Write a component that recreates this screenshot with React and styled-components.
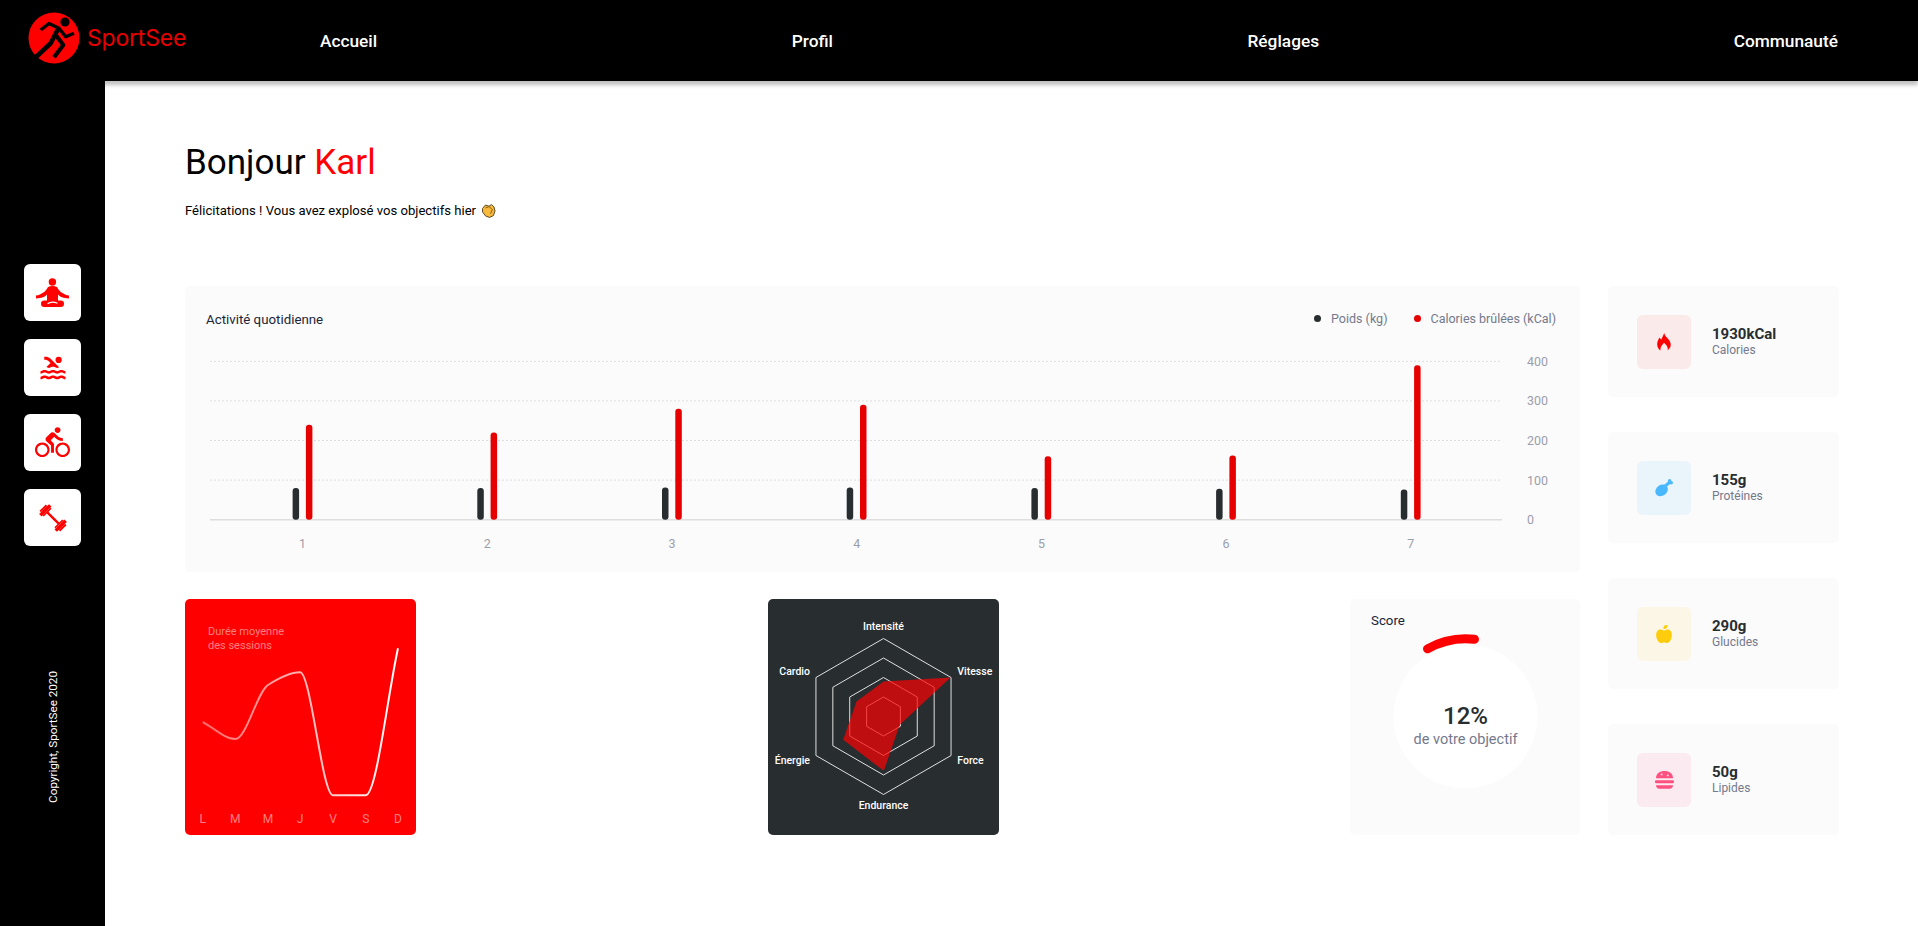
import React from 'react';
import styled, { createGlobalStyle } from 'styled-components';
import { MdPool, MdDirectionsBike } from 'react-icons/md';
import { FaAppleAlt } from 'react-icons/fa';

const GlobalStyle = createGlobalStyle`
  html, body {
    margin: 0;
    padding: 0;
    background: #fff;
    font-family: Roboto, "Liberation Sans", sans-serif;
  }
  * { box-sizing: border-box; }
`;

const Page = styled.div`
  display: flex;
  flex-direction: column;
  height: 926px;
  overflow: hidden;
`;

const Header = styled.header`
  position: relative;
  z-index: 2;
  display: flex;
  align-items: center;
  height: 81px;
  flex: none;
  padding: 0 80px 0 28px;
  background: #000;
  box-shadow: 0 4px 4px rgba(0, 0, 0, 0.25);
`;

const Logo = styled.div`
  display: flex;
  align-items: center;
  gap: 7px;
  width: 292px;
  flex: none;
  margin-top: -5px;
`;

const LogoName = styled.span`
  font-family: Inter, Roboto, sans-serif;
  font-size: 23px;
  color: #e60000;
  letter-spacing: -0.2px;
`;

const TopNav = styled.nav`
  flex: 1;
  display: flex;
  justify-content: space-between;
  margin-top: 1px;
`;

const TopLink = styled.a`
  font-size: 17.3px;
  font-weight: 500;
  color: #fff;
`;

const Body = styled.div`
  flex: 1;
  display: flex;
  min-height: 0;
`;

const Sidebar = styled.aside`
  width: 105px;
  flex: none;
  display: flex;
  flex-direction: column;
  align-items: center;
  padding: 183px 0 123px;
  background: #000;
`;

const SideIcons = styled.div`
  display: flex;
  flex-direction: column;
  gap: 18px;
`;

const SideIcon = styled.div`
  display: flex;
  align-items: center;
  justify-content: center;
  width: 57px;
  height: 57px;
  border-radius: 6px;
  background: #fff;
  color: #ff0101;
`;

const Copyright = styled.div`
  margin-top: auto;
  writing-mode: vertical-rl;
  transform: rotate(180deg);
  font-size: 11.7px;
  color: #fff;
`;

const Main = styled.main`
  flex: 1;
  min-width: 0;
  padding: 61px 79px 0 80px;
`;

const Title = styled.h1`
  margin: 0;
  font-size: 35px;
  line-height: 42px;
  font-weight: 400;
  color: #000;
`;

const Accent = styled.span`
  color: #ff0101;
`;

const Subtitle = styled.p`
  display: flex;
  align-items: center;
  gap: 5px;
  margin: 18px 0 0;
  height: 16px;
  font-size: 13.1px;
  color: #000;
`;

const Dashboard = styled.div`
  display: grid;
  grid-template-columns: 1395px 231px;
  column-gap: 28px;
  margin-top: 68px;
`;

const LeftColumn = styled.div`
  display: flex;
  flex-direction: column;
  gap: 27px;
`;

const ActivityCard = styled.section`
  height: 286px;
  border-radius: 5px;
  background: #fbfbfb;
`;

const ActivityHead = styled.div`
  display: flex;
  justify-content: space-between;
  align-items: center;
  height: 66px;
  padding: 0 24px 0 21px;
`;

const CardTitle = styled.h2`
  margin: 0;
  font-size: 13.3px;
  font-weight: 400;
  color: #20253a;
`;

const Legend = styled.div`
  display: flex;
  gap: 26px;
  margin-top: -2px;
`;

const LegendItem = styled.span`
  display: flex;
  align-items: center;
  gap: 10px;
  font-size: 12.5px;
  color: #74798c;
  &::before {
    content: '';
    width: 7px;
    height: 7px;
    border-radius: 50%;
    background: ${(p) => p.$color};
  }
`;

const ChartRow = styled.div`
  display: grid;
  grid-template-columns: 583px 582px 230px;
`;

const SmallCard = styled.section`
  position: relative;
  height: 236px;
  width: ${(p) => p.$width || 231}px;
  border-radius: 5px;
  overflow: hidden;
  background: ${(p) => p.$bg};
`;

const SessionTitle = styled.div`
  position: absolute;
  top: 26px;
  left: 23px;
  font-size: 11px;
  line-height: 13.5px;
  color: rgba(255, 255, 255, 0.5);
`;

const ScoreTitle = styled(CardTitle)`
  position: absolute;
  top: 14px;
  left: 21px;
`;

const ChartSvg = styled.svg`
  display: block;
`;

const TickText = styled.text`
  font-size: 12.4px;
  fill: #9b9eac;
`;

const DayText = styled.text`
  font-size: 12px;
  fill: rgba(255, 255, 255, 0.5);
`;

const RadarText = styled.text`
  font-size: 10.5px;
  font-weight: 500;
  fill: #fff;
`;

const ScoreValue = styled.text`
  font-size: 24px;
  font-weight: 500;
  fill: #282d30;
`;

const ScoreCaption = styled.text`
  font-size: 14.5px;
  fill: #74798c;
`;

const KeyColumn = styled.aside`
  display: flex;
  flex-direction: column;
  justify-content: space-between;
`;

const KeyCard = styled.div`
  display: flex;
  align-items: center;
  gap: 21px;
  height: 111px;
  padding-left: 29px;
  border-radius: 5px;
  background: #fbfbfb;
`;

const KeyIcon = styled.div`
  display: flex;
  align-items: center;
  justify-content: center;
  width: 54px;
  height: 54px;
  border-radius: 6px;
  background: ${(p) => p.$bg};
  color: ${(p) => p.$color};
`;

const KeyText = styled.div`
  display: flex;
  flex-direction: column;
  padding-bottom: 2px;
`;

const KeyValue = styled.strong`
  font-size: 15px;
  line-height: 18px;
  font-weight: 700;
  color: #282d30;
`;

const KeyLabel = styled.span`
  font-size: 12px;
  line-height: 14px;
  color: #74798c;
`;

const activity = [
  { day: 1, kg: 80, cal: 240 },
  { day: 2, kg: 80, cal: 220 },
  { day: 3, kg: 81, cal: 280 },
  { day: 4, kg: 81, cal: 290 },
  { day: 5, kg: 80, cal: 160 },
  { day: 6, kg: 78, cal: 162 },
  { day: 7, kg: 76, cal: 390 },
];

const sessions = [
  [17.7, 123, 'L'],
  [50.3, 140, 'M'],
  [83, 86, 'M'],
  [115, 73.3, 'J'],
  [148, 196.3, 'V'],
  [180.7, 196.3, 'S'],
  [213, 49.3, 'D'],
];

// same maths as a monotone x curve
const monotonePath = (pts) => {
  const n = pts.length;
  const d = [];
  const s = [];
  for (let i = 0; i < n - 1; i++) {
    s.push((pts[i + 1][1] - pts[i][1]) / (pts[i + 1][0] - pts[i][0]));
  }
  d[0] = s[0];
  d[n - 1] = s[n - 2];
  for (let i = 1; i < n - 1; i++) {
    d[i] = s[i - 1] * s[i] <= 0 ? 0 : (2 * s[i - 1] * s[i]) / (s[i - 1] + s[i]);
  }
  let path = `M${pts[0][0]} ${pts[0][1]}`;
  for (let i = 0; i < n - 1; i++) {
    const h = (pts[i + 1][0] - pts[i][0]) / 3;
    path += `C${pts[i][0] + h} ${pts[i][1] + d[i] * h} ${pts[i + 1][0] - h} ${
      pts[i + 1][1] - d[i + 1] * h
    } ${pts[i + 1][0]} ${pts[i + 1][1]}`;
  }
  return path;
};

const hexagon = (r) =>
  [0, 1, 2, 3, 4, 5]
    .map((i) => {
      const a = (i * Math.PI) / 3;
      return `${r * Math.sin(a)},${-r * Math.cos(a)}`;
    })
    .join(' ');

const LogoMark = () => (
  <svg width="52" height="52" viewBox="0 0 52 52">
    <circle cx="26" cy="26" r="25.5" fill="#ff0000" />
    <circle cx="37" cy="10" r="4.6" fill="#000" />
    <g fill="none" stroke="#000" strokeLinejoin="round">
      <path d="M12.7 18 21 11.5 31 16.3 37.7 24.7 46 21.3" strokeWidth="3.4" />
      <path d="M30 17 22.7 31.3 7.5 45.5" strokeWidth="4.6" />
      <path d="M27.7 23 35.3 33 26 45.3" strokeWidth="4.2" />
    </g>
  </svg>
);

const ClapIcon = () => (
  <svg width="15" height="15" viewBox="0 0 15 15">
    <path
      d="M1.5 5.5 4.5 2 8 3.2 10.5 1.6 13 4 14 8 12.4 12.6 8.6 14.4 4.6 13 1.6 9Z"
      fill="#f9b93c"
      stroke="#4c3a12"
      strokeWidth="0.9"
    />
    <path d="M4.4 5 8 3.6 11.4 6.6 9.4 10.8" fill="none" stroke="#7a5a14" strokeWidth="0.9" />
  </svg>
);

const YogaIcon = () => (
  <svg width="33" height="30" viewBox="0 0 33 30" fill="currentColor">
    <circle cx="16.4" cy="4" r="3.7" />
    <path d="M12 9C10 13.5 5.5 16.6 0 17.6V20.4C5.5 20.2 9.4 18.6 11 16.4V23H22V16.4C23.6 18.6 27.5 20.2 33 20.4V17.6C27.5 16.6 23 13.5 21 9 18.6 7.8 14.4 7.8 12 9Z" />
    <rect x="5" y="22.4" width="23" height="6.6" rx="3.3" />
    <path d="M11.5 25.7C14 23.9 18 23.7 21.5 25.3" fill="none" stroke="#fff" strokeWidth="1.1" />
  </svg>
);

const BarbellIcon = () => (
  <svg width="30" height="30" viewBox="0 0 30 30" fill="currentColor">
    <g transform="rotate(45 15 15)">
      <rect x="7" y="13.8" width="16" height="2.4" />
      <rect x="0.4" y="10.5" width="2" height="9" />
      <rect x="2.4" y="8" width="3.5" height="14" />
      <rect x="5.9" y="9.5" width="1.6" height="11" />
      <rect x="22.5" y="9.5" width="1.6" height="11" />
      <rect x="24.1" y="8" width="3.5" height="14" />
      <rect x="27.6" y="10.5" width="2" height="9" />
    </g>
  </svg>
);

const FlameIcon = () => (
  <svg width="14" height="18" viewBox="0 0 14 18" fill="currentColor">
    <path d="M7.2 0C7.6 3 10.2 4.6 12 7 13.6 9.2 14.4 12 13 14.6 12.4 15.8 11.4 16.8 10.6 17.4 11 15.6 10.6 14 9.6 12.6L7 9.8 4.6 12.8C3.6 14.2 3.2 15.8 3.6 17.4 2.4 16.8 1.4 15.6 0.8 14.2-0.4 11.4 0.2 8 2.6 4.6L4.2 6.8C5 4.6 6.4 2.4 7.2 0Z" />
  </svg>
);

const DrumstickIcon = () => (
  <svg width="18" height="18" viewBox="0 0 18 18" fill="currentColor">
    <ellipse cx="6.6" cy="11.4" rx="6.6" ry="5.4" transform="rotate(-35 6.6 11.4)" />
    <path d="M9 8 15 3" stroke="currentColor" strokeWidth="3" />
    <circle cx="14.6" cy="1.8" r="1.7" />
    <circle cx="16.3" cy="3.8" r="1.7" />
  </svg>
);

const BurgerIcon = () => (
  <svg width="19" height="18" viewBox="0 0 19 18" fill="currentColor">
    <path d="M1 7.3C1 2.4 5 0 9.5 0S18 2.4 18 7.3Z" />
    <circle cx="6.6" cy="3.4" r="0.9" fill="#fbeaef" />
    <circle cx="12.8" cy="4.4" r="0.9" fill="#fbeaef" />
    <rect x="0" y="9.3" width="19" height="3" rx="1.2" />
    <path d="M1 14.3H18C18 16.4 16.6 17.8 14.6 17.8H4.4C2.4 17.8 1 16.4 1 14.3Z" />
  </svg>
);

const ActivityChart = () => {
  const baseY = 167.7;
  const perHundred = 39.6;
  return (
    <ChartSvg width="1395" height="220" viewBox="0 0 1395 220">
      {[1, 2, 3, 4].map((n) => (
        <line
          key={n}
          x1="25"
          x2="1317"
          y1={baseY - n * perHundred}
          y2={baseY - n * perHundred}
          stroke="#dedede"
          strokeDasharray="2 2"
        />
      ))}
      <line x1="25" x2="1317" y1={baseY} y2={baseY} stroke="#dedede" strokeWidth="1.5" />
      {activity.map((a, i) => {
        const cx = 117.6 + i * 184.7;
        return (
          <g key={a.day}>
            <rect
              x={cx - 10}
              y={baseY - (a.kg * perHundred) / 100}
              width="6.5"
              height={(a.kg * perHundred) / 100}
              rx="3"
              fill="#282d30"
            />
            <rect
              x={cx + 3.3}
              y={baseY - (a.cal * perHundred) / 100}
              width="6.5"
              height={(a.cal * perHundred) / 100}
              rx="3"
              fill="#e60000"
            />
            <TickText x={cx} y={baseY + 28} textAnchor="middle">
              {a.day}
            </TickText>
          </g>
        );
      })}
      {[0, 100, 200, 300, 400].map((v) => (
        <TickText key={v} x="1342" y={baseY - (v * perHundred) / 100 + 4.5}>
          {v}
        </TickText>
      ))}
    </ChartSvg>
  );
};

const SessionChart = () => (
  <ChartSvg width="231" height="236" viewBox="0 0 231 236">
    <defs>
      <linearGradient id="sessionLine" x1="0" x2="1" y1="0" y2="0">
        <stop offset="0" stopColor="#fff" stopOpacity="0.4" />
        <stop offset="1" stopColor="#fff" stopOpacity="1" />
      </linearGradient>
    </defs>
    <path d={monotonePath(sessions)} fill="none" stroke="url(#sessionLine)" strokeWidth="2" />
    {sessions.map(([x, , label], i) => (
      <DayText key={i} x={x} y="224" textAnchor="middle">
        {label}
      </DayText>
    ))}
  </ChartSvg>
);

const RadarChart = () => (
  <ChartSvg width="231" height="236" viewBox="0 0 231 236">
    <g transform="translate(115.5 117.5)">
      {[19.5, 39, 58.5, 78].map((r) => (
        <polygon key={r} points={hexagon(r)} fill="none" stroke="#fff" strokeOpacity="0.85" />
      ))}
      <polygon
        points="0,-35 67,-39 16.3,8.3 0.3,54.3 -40.3,23.3 -27,-15"
        fill="#ff0101"
        fillOpacity="0.7"
      />
      <RadarText x="0" y="-87" textAnchor="middle">Intensité</RadarText>
      <RadarText x="73.8" y="-42">Vitesse</RadarText>
      <RadarText x="73.8" y="47">Force</RadarText>
      <RadarText x="0" y="92" textAnchor="middle">Endurance</RadarText>
      <RadarText x="-73.5" y="47" textAnchor="end">Énergie</RadarText>
      <RadarText x="-73.5" y="-42" textAnchor="end">Cardio</RadarText>
    </g>
  </ChartSvg>
);

const ScoreChart = () => (
  <ChartSvg width="230" height="236" viewBox="0 0 230 236">
    <g transform="translate(115.5 117.5)">
      <circle r="72" fill="#fff" />
      <path
        d="M9 -77.3A78 78 0 0 0 -38 -67.7"
        fill="none"
        stroke="#ff0000"
        strokeWidth="9"
        strokeLinecap="round"
      />
      <ScoreValue y="7" textAnchor="middle">12%</ScoreValue>
      <ScoreCaption y="27" textAnchor="middle">de votre objectif</ScoreCaption>
    </g>
  </ChartSvg>
);

const keyData = [
  { value: '1930kCal', label: 'Calories', bg: '#fbeaea', color: '#ff0000', icon: <FlameIcon /> },
  { value: '155g', label: 'Protéines', bg: '#e9f4fb', color: '#4ab8ff', icon: <DrumstickIcon /> },
  { value: '290g', label: 'Glucides', bg: '#fbf6e5', color: '#fdcc0c', icon: <FaAppleAlt size={18} /> },
  { value: '50g', label: 'Lipides', bg: '#fbeaef', color: '#fd5181', icon: <BurgerIcon /> },
];

const App = () => (
  <Page>
    <GlobalStyle />
    <Header>
      <Logo>
        <LogoMark />
        <LogoName>SportSee</LogoName>
      </Logo>
      <TopNav>
        <TopLink>Accueil</TopLink>
        <TopLink>Profil</TopLink>
        <TopLink>Réglages</TopLink>
        <TopLink>Communauté</TopLink>
      </TopNav>
    </Header>
    <Body>
      <Sidebar>
        <SideIcons>
          <SideIcon><YogaIcon /></SideIcon>
          <SideIcon><MdPool size={30} /></SideIcon>
          <SideIcon><MdDirectionsBike size={35} /></SideIcon>
          <SideIcon><BarbellIcon /></SideIcon>
        </SideIcons>
        <Copyright>Copyright, SportSee 2020</Copyright>
      </Sidebar>
      <Main>
        <Title>
          Bonjour <Accent>Karl</Accent>
        </Title>
        <Subtitle>
          Félicitations ! Vous avez explosé vos objectifs hier <ClapIcon />
        </Subtitle>
        <Dashboard>
          <LeftColumn>
            <ActivityCard>
              <ActivityHead>
                <CardTitle>Activité quotidienne</CardTitle>
                <Legend>
                  <LegendItem $color="#282d30">Poids (kg)</LegendItem>
                  <LegendItem $color="#e60000">Calories brûlées (kCal)</LegendItem>
                </Legend>
              </ActivityHead>
              <ActivityChart />
            </ActivityCard>
            <ChartRow>
              <SmallCard $bg="#ff0000">
                <SessionTitle>
                  Durée moyenne
                  <br />
                  des sessions
                </SessionTitle>
                <SessionChart />
              </SmallCard>
              <SmallCard $bg="#282d30">
                <RadarChart />
              </SmallCard>
              <SmallCard $bg="#fbfbfb" $width={230}>
                <ScoreTitle>Score</ScoreTitle>
                <ScoreChart />
              </SmallCard>
            </ChartRow>
          </LeftColumn>
          <KeyColumn>
            {keyData.map(({ value, label, bg, color, icon }) => (
              <KeyCard key={label}>
                <KeyIcon $bg={bg} $color={color}>
                  {icon}
                </KeyIcon>
                <KeyText>
                  <KeyValue>{value}</KeyValue>
                  <KeyLabel>{label}</KeyLabel>
                </KeyText>
              </KeyCard>
            ))}
          </KeyColumn>
        </Dashboard>
      </Main>
    </Body>
  </Page>
);

export default App;
